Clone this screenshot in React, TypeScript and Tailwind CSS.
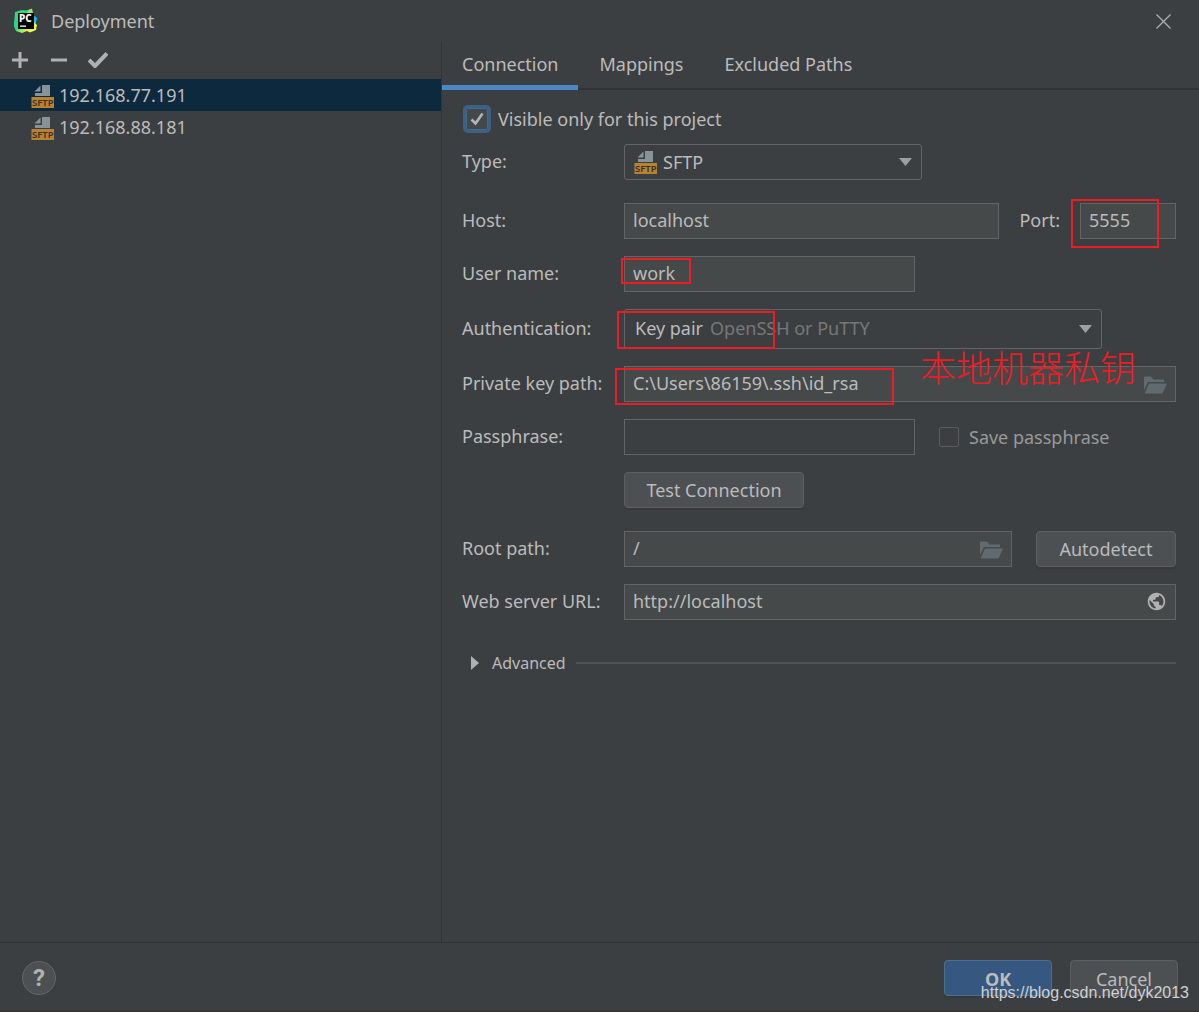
import type { ReactNode } from "react";
import { MdPublic } from "react-icons/md";

const FIELD =
  "h-9 w-full border border-[#646464] bg-[#45494a] px-2 pb-0.5 leading-6 text-[#bbbbbb] outline-none";
const BUTTON =
  "h-9 rounded border border-[#5e6060] bg-[#4c5052] text-[#bbbbbb] shadow-[0_2px_1px_#37393a]";

function SftpIcon({ className = "" }: { className?: string }) {
  return (
    <svg className={className} width="24" height="24" viewBox="0 0 24 24" aria-hidden="true">
      <path d="M11 1H19V12H4V9H11Z" fill="#87939a" />
      <path d="M9.500 1.500V7.500H3.500Z" fill="#87939a" />
      <rect x="0.500" y="13" width="22.500" height="11" fill="#b58332" />
      <text
        x="11.800"
        y="22.300"
        textAnchor="middle"
        fontFamily="Noto Sans, sans-serif"
        fontSize="9.500"
        fontWeight="600"
        fill="#3d2f17"
      >
        SFTP
      </text>
    </svg>
  );
}

function PyCharmIcon() {
  return (
    <svg width="24" height="26" viewBox="0 0 24 26" aria-hidden="true">
      <defs>
        <linearGradient id="leaf" x1="0" y1="0" x2="1" y2="1">
          <stop offset="0" stopColor="#21d789" />
          <stop offset="0.450" stopColor="#35dc80" />
          <stop offset="0.750" stopColor="#e6f24e" />
          <stop offset="1" stopColor="#fcf84a" />
        </linearGradient>
      </defs>
      <path d="M19 7L23 10L22 15L17 18Z" fill="#07c3f2" />
      <path d="M1 4L8 2L12 2.500L17 1L19 6L20 14L23 17L22 22L16 24.500L13 23L8 25L2 23L0 18Z" fill="url(#leaf)" />
      <path d="M15 2L18 0.500L19 5H13Z" fill="#9be65a" />
      <path d="M0 13L4 11L4 22L2 22L0 18Z" fill="#21d789" />
      <rect x="4" y="5" width="16" height="16" fill="#000" />
      <text
        x="5"
        y="13.500"
        fontFamily="Noto Sans, sans-serif"
        fontSize="10"
        fontWeight="800"
        fill="#fff"
      >
        PC
      </text>
      <rect x="6" y="17.500" width="6" height="1.300" fill="#fff" />
    </svg>
  );
}

function FolderIcon() {
  return (
    <svg width="23" height="18" viewBox="0 0 23 18" aria-hidden="true">
      <path d="M0 0.500H7L9.500 3.500H20V6H4L0 14Z" fill="#616a6e" />
      <path d="M5 7.500H23L18.500 17.500H0.500Z" fill="#616a6e" />
    </svg>
  );
}

function Arrow() {
  return (
    <svg
      className="pointer-events-none absolute top-1/2 right-2.5 -translate-y-1/2"
      width="13"
      height="8"
      viewBox="0 0 13 8"
      aria-hidden="true"
    >
      <path d="M0 0H13L6.500 8Z" fill="#9da0a2" />
    </svg>
  );
}

function Row({ label, id, children }: { label: string; id: string; children: ReactNode }) {
  return (
    <div className="flex items-center">
      <label htmlFor={id} className="w-[162px] shrink-0 pb-0.5">
        {label}
      </label>
      {children}
    </div>
  );
}

function Mark({ className }: { className: string }) {
  return <div className={`pointer-events-none absolute border-2 border-[#ed1c24] ${className}`} />;
}

function Sidebar() {
  const servers = ["192.168.77.191", "192.168.88.181"];
  return (
    <aside className="w-[442px] shrink-0 border-r border-[#323537]">
      <div className="flex h-[37px] items-center gap-[15px] pb-0.5 pl-2">
        <button aria-label="Add" className="flex size-6 items-center justify-center">
          <svg width="16" height="16" viewBox="0 0 16 16">
            <path d="M8 0V16M0 8H16" stroke="#afb1b3" strokeWidth="3" />
          </svg>
        </button>
        <button aria-label="Remove" className="flex size-6 items-center justify-center">
          <svg width="16" height="16" viewBox="0 0 16 16">
            <path d="M0 8H16" stroke="#afb1b3" strokeWidth="3" />
          </svg>
        </button>
        <button aria-label="Use as default" className="flex size-6 items-center justify-center">
          <svg width="20" height="16" viewBox="0 0 20 16">
            <path d="M1 8L7 14L19 1.500" stroke="#afb1b3" strokeWidth="4" fill="none" />
          </svg>
        </button>
      </div>
      <ul>
        {servers.map((s, i) => (
          <li key={s}>
            <button
              className={`flex h-8 w-full items-center gap-1 pl-[31px] text-left ${i === 0 ? "bg-[#0d293e]" : ""}`}
            >
              <SftpIcon className="mt-0.5" />
              {s}
            </button>
          </li>
        ))}
      </ul>
    </aside>
  );
}

function ConnectionForm() {
  return (
    <form className="flex flex-col gap-[23px] pr-[23px] pl-5" onSubmit={(e) => e.preventDefault()}>
      <div className="flex flex-col gap-3 pt-4">
        <div className="flex h-[26px] items-center gap-2 pl-0.5">
          <span className="relative flex">
            <input
              id="visible"
              type="checkbox"
              defaultChecked
              className="m-0.5 size-[22px] appearance-none rounded-xs border border-[#43698e] bg-[#43494a] outline-3 outline-[#3d6185]"
            />
            <svg
              className="pointer-events-none absolute top-1.5 left-1.5"
              width="14"
              height="14"
              viewBox="0 0 14 14"
              aria-hidden="true"
            >
              <path d="M1.500 7.500L5.500 11.500L12.500 1.500" stroke="#b4b4b4" strokeWidth="2.600" fill="none" />
            </svg>
          </span>
          <label htmlFor="visible">Visible only for this project</label>
        </div>
        <Row label="Type:" id="type">
          <div className="relative w-[298px]">
            <select
              id="type"
              className="h-9 w-full appearance-none rounded-[3px] border border-[#646464] bg-[#3c3f41] pl-[38px] leading-6 outline-none"
            >
              <option>SFTP</option>
            </select>
            <SftpIcon className="pointer-events-none absolute top-1.5 left-2.5" />
            <Arrow />
          </div>
        </Row>
      </div>

      <div className="flex flex-col gap-[17px]">
        <Row label="Host:" id="host">
          <input id="host" className={FIELD} defaultValue="localhost" />
          <label htmlFor="port" className="mx-5 shrink-0 pb-0.5">
            Port:
          </label>
          <div className="relative w-24 shrink-0">
            <input id="port" className={FIELD} defaultValue="5555" />
            <Mark className="-top-1 -left-[9px] h-[49px] w-[88px]" />
          </div>
        </Row>
        <Row label="User name:" id="user">
          <div className="relative w-[291px]">
            <input id="user" className={FIELD} defaultValue="work" />
            <Mark className="top-0.5 -left-[3px] h-[26px] w-[70px]" />
          </div>
        </Row>
        <Row label="Authentication:" id="auth">
          <div className="relative w-[478px]">
            <select
              id="auth"
              className="h-10 w-full appearance-none rounded-[3px] border border-[#646464] bg-[#3c3f41] pb-0.5 pl-2.5 leading-6 outline-none"
            >
              <option>Key pair</option>
            </select>
            <span className="pointer-events-none absolute top-[7px] left-[86px] text-[#777777]">
              OpenSSH or PuTTY
            </span>
            <Arrow />
            <Mark className="top-0.5 -left-[7px] h-[38px] w-[158px]" />
          </div>
        </Row>
        <Row label="Private key path:" id="key">
          <div className="relative w-full">
            <input id="key" className={FIELD} defaultValue="C:\Users\86159\.ssh\id_rsa" />
            <button aria-label="Browse key" className="absolute top-2.5 right-[9px]">
              <FolderIcon />
            </button>
            <Mark className="top-0.5 -left-[9px] h-[37px] w-[279px]" />
            <span className="pointer-events-none absolute -top-[26px] right-10 font-['Noto_Sans_CJK_SC',sans-serif] text-4xl leading-[52px] font-light whitespace-nowrap text-[#ed1c24]">
              本地机器私钥
            </span>
          </div>
        </Row>
        <Row label="Passphrase:" id="pass">
          <input
            id="pass"
            type="password"
            className="h-9 w-[291px] border border-[#646464] bg-[#3c3f41] px-2 outline-none"
          />
          <input
            id="save"
            type="checkbox"
            disabled
            className="mr-2.5 ml-6 size-5 appearance-none rounded-xs border border-[#5a5b5c]"
          />
          <label htmlFor="save" className="text-[#999999]">
            Save passphrase
          </label>
        </Row>
        <button className={`${BUTTON} ml-[162px] w-[180px]`}>Test Connection</button>
      </div>

      <div className="flex flex-col gap-[17px]">
        <Row label="Root path:" id="root-path">
          <div className="relative grow">
            <input id="root-path" className={FIELD} defaultValue="/" />
            <button aria-label="Browse root" className="absolute top-2.5 right-[9px]">
              <FolderIcon />
            </button>
          </div>
          <button className={`${BUTTON} ml-6 w-[140px] shrink-0`}>Autodetect</button>
        </Row>
        <Row label="Web server URL:" id="url">
          <div className="relative w-full">
            <input id="url" className={FIELD} defaultValue="http://localhost" />
            <button aria-label="Open in browser" className="absolute top-[7px] right-[9px]">
              <MdPublic size={21} color="#afb1b3" />
            </button>
          </div>
        </Row>
      </div>

      <div className="flex items-center gap-2.5 pt-2 pl-[9px]">
        <button className="flex items-center gap-[13px] text-base">
          <svg width="8" height="14" viewBox="0 0 8 14" aria-hidden="true">
            <path d="M0 0L8 7L0 14Z" fill="#afb1b3" />
          </svg>
          Advanced
        </button>
        <div className="h-0.5 grow bg-[#515151]" />
      </div>
    </form>
  );
}

export default function App() {
  return (
    <div className="relative flex min-h-screen flex-col border-b border-[#323232] bg-[#3c3f41] font-['Noto_Sans',sans-serif] text-lg leading-6 text-[#bbbbbb]">
      <header className="flex h-[42px] items-center justify-between pr-7 pl-3.5">
        <div className="flex items-center gap-[13px]">
          <PyCharmIcon />
          <h1>Deployment</h1>
        </div>
        <button aria-label="Close">
          <svg width="15" height="15" viewBox="0 0 15 15">
            <path d="M0.500 0.500L14.500 14.500M14.500 0.500L0.500 14.500" stroke="#aeb0b1" strokeWidth="1.300" />
          </svg>
        </button>
      </header>

      <div className="flex grow">
        <Sidebar />
        <main className="min-w-0 grow">
          <nav className="flex h-12 border-b-2 border-[#323232]">
            <button className="-mb-0.5 border-b-5 border-[#4a88c7] px-5">Connection</button>
            <button className="px-[21px] pb-0.5">Mappings</button>
            <button className="px-5 pb-0.5">Excluded Paths</button>
          </nav>
          <ConnectionForm />
        </main>
      </div>

      <footer className="flex h-[69px] items-center justify-between border-t border-[#323232] pt-0.5 pr-[21px] pl-[22px]">
        <button
          aria-label="Help"
          className="flex size-[34px] items-center justify-center rounded-full border border-[#646767] bg-[#4c5052] font-['Roboto',sans-serif] text-2xl font-bold text-[#afb1b3]"
        >
          ?
        </button>
        <div className="flex gap-[18px]">
          <button className="h-9 w-[108px] rounded border border-[#4c708c] bg-[#365880] pt-0.5 font-bold shadow-[0_2px_1px_#37393a]">
            OK
          </button>
          <button className={`${BUTTON} w-[108px] pt-0.5`}>Cancel</button>
        </div>
      </footer>
      <span className="pointer-events-none absolute right-2.5 bottom-1.5 font-['Liberation_Sans',sans-serif] text-base text-[#d0d1d1]">
        https://blog.csdn.net/dyk2013
      </span>
    </div>
  );
}
